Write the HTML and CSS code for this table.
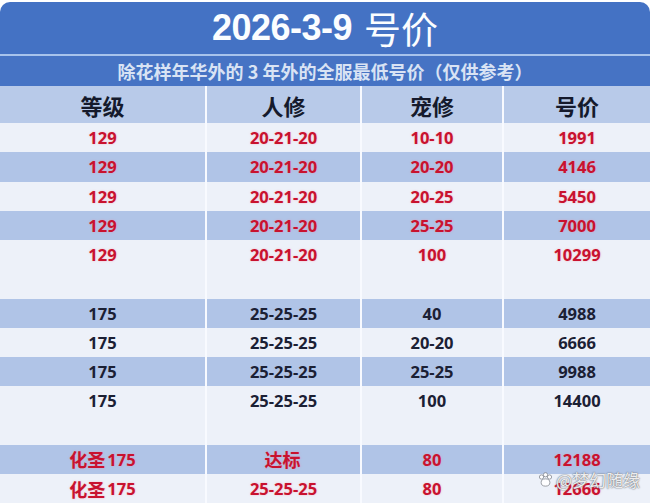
FILE: index.html
```html
<!DOCTYPE html>
<html lang="zh-CN">
<head>
<meta charset="utf-8">
<title>2026-3-9 号价</title>
<link rel="stylesheet" href="styles.css">
</head>
<body>
<div class="sheet">
  <div class="title"><span class="date">2026-3-9</span><span class="cn">号价</span></div>
  <div class="subtitle">除花样年华外的 3 年外的全服最低号价（仅供参考）</div>
  <div class="row head"><div>等级</div><div>人修</div><div>宠修</div><div>号价</div></div>
  <div class="row red"><div>129</div><div>20-21-20</div><div>10-10</div><div>1991</div></div>
  <div class="row red stripe"><div>129</div><div>20-21-20</div><div>20-20</div><div>4146</div></div>
  <div class="row red"><div>129</div><div>20-21-20</div><div>20-25</div><div>5450</div></div>
  <div class="row red stripe"><div>129</div><div>20-21-20</div><div>25-25</div><div>7000</div></div>
  <div class="row red"><div>129</div><div>20-21-20</div><div>100</div><div>10299</div></div>
  <div class="row"><div></div><div></div><div></div><div></div></div>
  <div class="row dark stripe"><div>175</div><div>25-25-25</div><div>40</div><div>4988</div></div>
  <div class="row dark"><div>175</div><div>25-25-25</div><div>20-20</div><div>6666</div></div>
  <div class="row dark stripe"><div>175</div><div>25-25-25</div><div>25-25</div><div>9988</div></div>
  <div class="row dark"><div>175</div><div>25-25-25</div><div>100</div><div>14400</div></div>
  <div class="row"><div></div><div></div><div></div><div></div></div>
  <div class="row red stripe"><div><span class="hz">化圣</span>175</div><div><span class="hz">达标</span></div><div>80</div><div>12188</div></div>
  <div class="row red"><div><span class="hz">化圣</span>175</div><div>25-25-25</div><div>80</div><div>12666</div></div>
  <div class="watermark"><svg class="paw" width="15" height="15" viewBox="0 0 12 12"><circle cx="2.8" cy="4" r="1.7"/><circle cx="6" cy="2.2" r="1.7"/><circle cx="9.2" cy="4" r="1.7"/><ellipse cx="6" cy="8.4" rx="3.5" ry="2.9"/></svg><span>@梦幻随缘</span></div>
</div>
</body>
</html>
```
FILE: styles.css
```css
* { box-sizing: border-box; }
html, body { margin: 0; padding: 0; background: #ffffff; }
body { width: 650px; height: 503px; overflow: hidden; font-family: "Open Sans", "Noto Sans CJK SC", sans-serif; }
.sheet { position: relative; padding-top: 2px; }
.title {
  height: 54px;
  background: #4472c4;
  border-radius: 10px 10px 0 0;
  border-bottom: 2px solid #a8c3ec;
  display: flex;
  align-items: center;
  justify-content: center;
  color: #fbfdff;
  padding-left: 0;
}
.title .date { font-family: "Liberation Sans", "Open Sans", sans-serif; font-weight: 700; font-size: 36px; letter-spacing: -0.5px; }
.title .cn { font-family: "Noto Sans CJK SC", sans-serif; font-weight: 400; font-size: 37px; margin-left: 12px; line-height: 1; }
.subtitle {
  height: 30px;
  background: #4673c4;
  color: #d9e3f4;
  font-family: "Noto Sans CJK SC", serif;
  font-weight: 700;
  font-size: 18px;
  display: flex;
  align-items: center;
  justify-content: center;
  padding-left: 0;
}
.row {
  display: grid;
  grid-template-columns: 205px 153px 140px 146px;
  column-gap: 2px;
  height: 29.25px;
  background: #f8faff;
}
.row > div {
  display: flex;
  align-items: center;
  justify-content: center;
  background: #edf1f9;
  font-weight: 700;
  font-size: 16.5px;
}
.row.stripe > div { background: #b0c4e7; }
.row.head { height: 37px; }
.row.head > div {
  background: #b8cae9;
  font-family: "Noto Sans CJK SC", serif;
  font-size: 22px;
  color: #151a2c;
  padding-top: 1px;
}
.red > div { color: #c8122f; text-shadow: 0 0 2px rgba(255, 130, 150, 0.55); }
.dark > div { color: #1b2034; }
.hz { font-family: "Noto Sans CJK SC", serif; font-weight: 700; font-size: 18px; margin-right: 2px; }
.watermark {
  position: absolute;
  right: 10px;
  bottom: 15px;
  display: flex;
  align-items: center;
  gap: 3px;
  color: rgba(255, 255, 255, 0.9);
  font-family: "Noto Sans CJK SC", sans-serif;
  font-size: 17px;
  line-height: 1;
  text-shadow: 0 0 1px #5f636c, 0 0 2px #7d818a;
}
.paw { fill: rgba(255,255,255,0.92); stroke: #7d818a; stroke-width: 0.6; }
```
